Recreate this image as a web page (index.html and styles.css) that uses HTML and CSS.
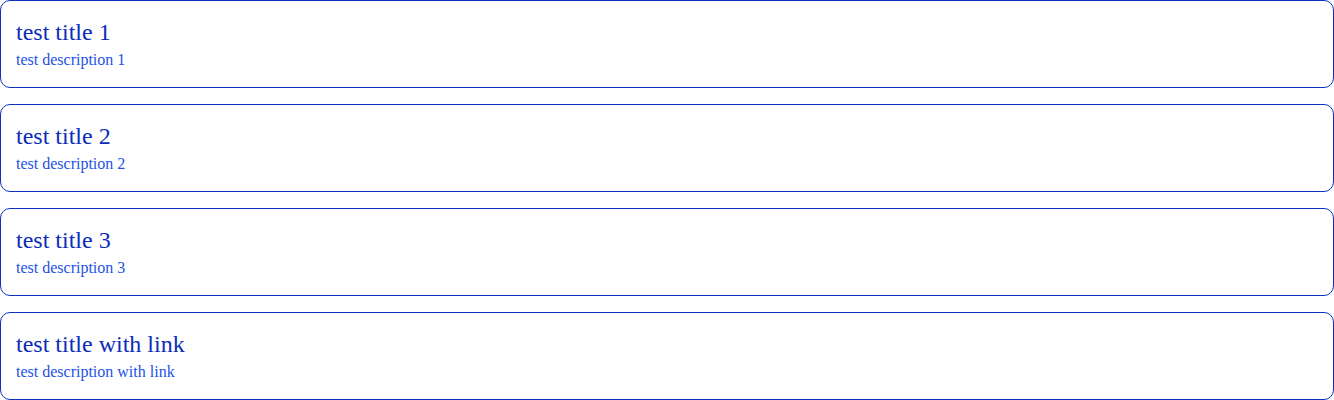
FILE: index.html
```html
<!DOCTYPE html>
<html>
<head>
<meta charset="utf-8">
<link rel="stylesheet" href="styles.css">
</head>
<body>
<div class="list">
  <div class="card">
    <div class="title">test title 1</div>
    <div class="desc">test description 1</div>
  </div>
  <div class="card">
    <div class="title">test title 2</div>
    <div class="desc">test description 2</div>
  </div>
  <div class="card">
    <div class="title">test title 3</div>
    <div class="desc">test description 3</div>
  </div>
  <div class="card">
    <div class="title">test title with link</div>
    <div class="desc">test description with link</div>
  </div>
</div>
</body>
</html>
```
FILE: styles.css
```css
html, body {
  margin: 0;
  padding: 0;
  background: #ffffff;
}
body {
  font-family: "Liberation Serif", "Times New Roman", serif;
}
.list {
  display: flex;
  flex-direction: column;
  gap: 16px;
}
.card {
  height: 88px;
  box-sizing: border-box;
  border: 1px solid #0d30c4;
  border-radius: 10px;
  padding: 17px 15px 0 15px;
  display: flex;
  flex-direction: column;
}
.title {
  font-size: 24px;
  line-height: 28px;
  color: #0b2cb8;
}
.desc {
  font-size: 16px;
  line-height: 18px;
  margin-top: 5px;
  color: #1d52e6;
}
```
